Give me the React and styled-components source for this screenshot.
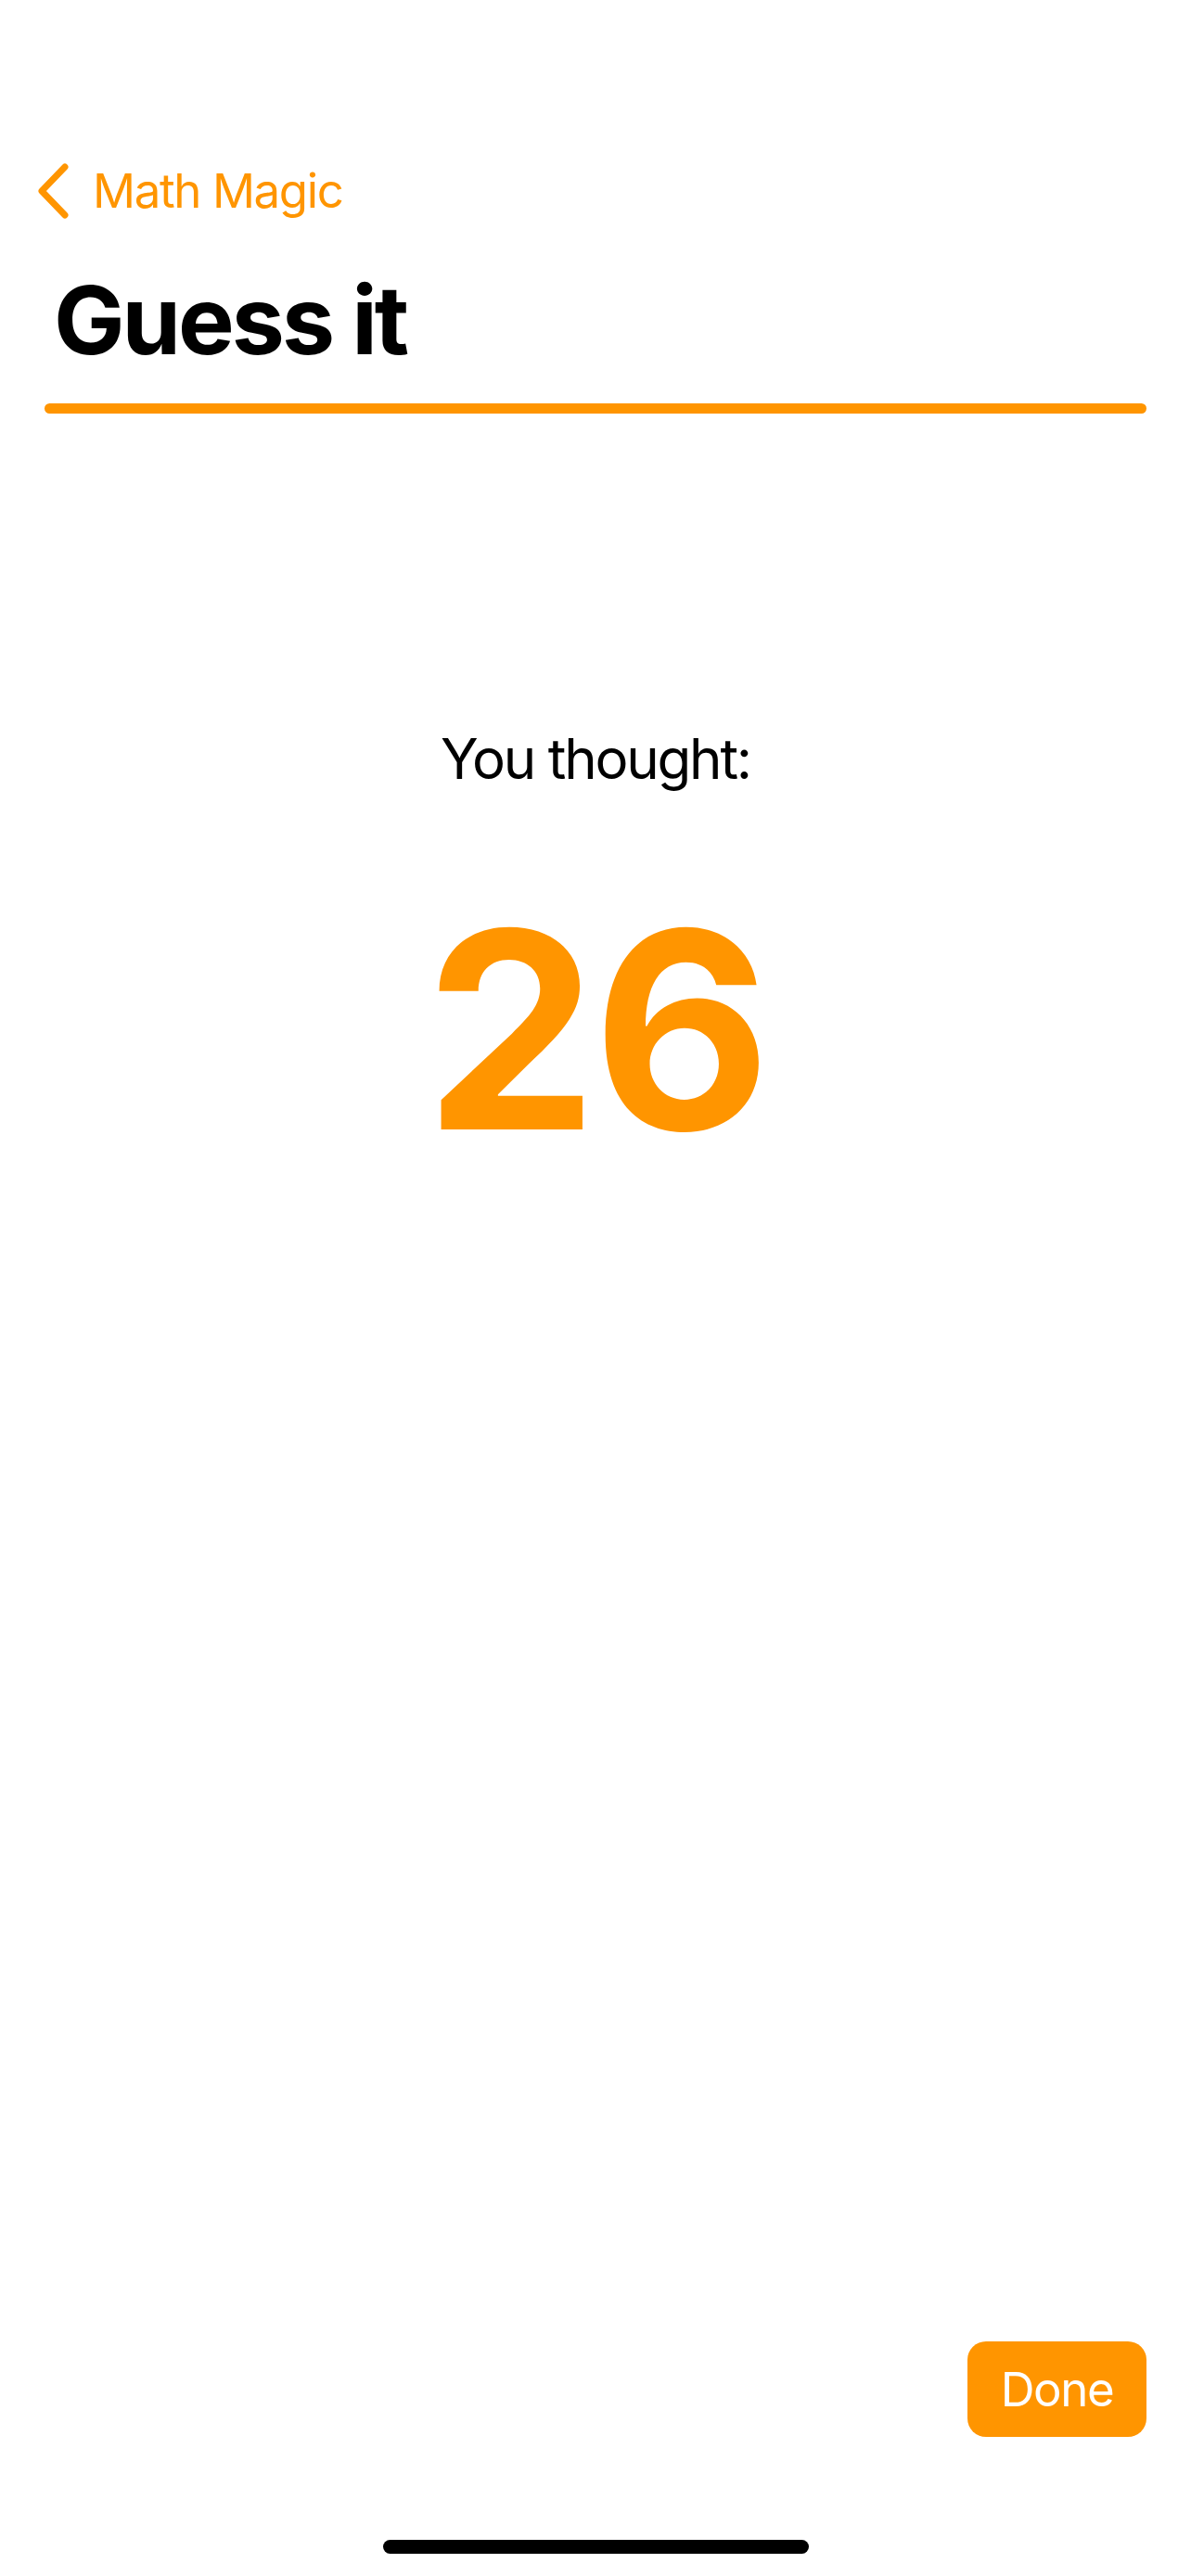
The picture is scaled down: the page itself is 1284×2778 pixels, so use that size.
import styled, { createGlobalStyle } from 'styled-components'

const orange = '#FF9500'

const Global = createGlobalStyle`
  html, body {
    margin: 0;
    padding: 0;
    background: #fff;
  }
  body {
    font-family: 'Inter', 'Noto Sans', sans-serif;
    -webkit-font-smoothing: antialiased;
  }
`

const Page = styled.div`
  display: flex;
  flex-direction: column;
  width: 1284px;
  height: 2778px;
  background: #fff;
  box-sizing: border-box;
`

const NavBar = styled.div`
  display: flex;
  align-items: center;
  gap: 24px;
  margin-top: 176px;
  height: 60px;
  padding-left: 38px;
`

const BackLabel = styled.span`
  color: ${orange};
  font-size: 51px;
  line-height: 60px;
  font-weight: 400;
  letter-spacing: -1.4px;
`

const Title = styled.h1`
  margin: 49px 0 0;
  padding-left: 58px;
  font-size: 102px;
  line-height: 120px;
  font-weight: 700;
  letter-spacing: -3px;
  color: #000;
`

const Rule = styled.div`
  margin: 30px 48px 0;
  height: 11px;
  border-radius: 6px;
  background: ${orange};
`

const Content = styled.div`
  display: flex;
  flex-direction: column;
  align-items: center;
  margin-top: 336px;
`

const Caption = styled.div`
  font-size: 60px;
  line-height: 72px;
  font-weight: 400;
  letter-spacing: -2.2px;
  color: #000;
`

const Number = styled.div`
  margin-top: 106px;
  font-size: 296px;
  line-height: 300px;
  font-weight: 700;
  letter-spacing: -5px;
  color: ${orange};
`

const Spacer = styled.div`
  flex: 1;
`

const Footer = styled.div`
  display: flex;
  justify-content: flex-end;
  padding-right: 48px;
`

const DoneButton = styled.button`
  width: 193px;
  height: 103px;
  border: none;
  border-radius: 20px;
  background: ${orange};
  color: #fff;
  font-family: 'Inter', 'Noto Sans', sans-serif;
  font-size: 51px;
  font-weight: 400;
  letter-spacing: -1.4px;
  padding: 0;
`

const HomeBar = styled.div`
  align-self: center;
  width: 459px;
  height: 15px;
  border-radius: 8px;
  background: #000;
  margin: 111px 0 24px;
`

function Chevron() {
  return (
    <svg width="38" height="62" viewBox="0 0 38 62" fill="none">
      <path
        d="M32 5 L7 31 L32 57"
        stroke={orange}
        strokeWidth="7"
        strokeLinecap="round"
        strokeLinejoin="round"
      />
    </svg>
  )
}

export default function App() {
  return (
    <>
      <Global />
      <Page>
        <NavBar>
          <Chevron />
          <BackLabel>Math Magic</BackLabel>
        </NavBar>
        <Title>Guess it</Title>
        <Rule />
        <Content>
          <Caption>You thought:</Caption>
          <Number>26</Number>
        </Content>
        <Spacer />
        <Footer>
          <DoneButton>Done</DoneButton>
        </Footer>
        <HomeBar />
      </Page>
    </>
  )
}
